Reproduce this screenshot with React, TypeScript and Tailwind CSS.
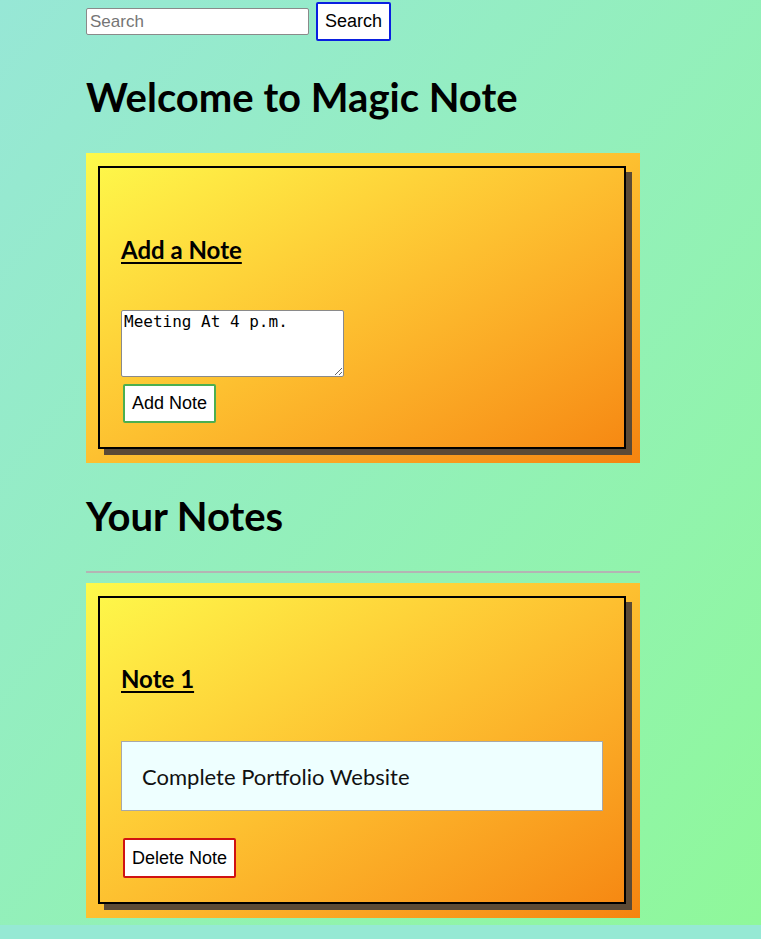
import React, { useState } from 'react'

const heading = { fontFamily: '"Source Sans Pro", Lato, "Noto Sans", sans-serif' }

function Card({ children }: { children: React.ReactNode }) {
  return (
    <div className="w-[554px] bg-gradient-to-br from-[#fdfa4b] to-[#f5840f] pl-[12px] pr-[14px] pt-[13px] pb-[14px]">
      <div className="border-2 border-black shadow-[6px_6px_0_#5b4a36] px-[21px]">{children}</div>
    </div>
  )
}

export default function App() {
  const [text, setText] = useState('Meeting At 4 p.m.')

  return (
    <div className="bg-[#96e9d4]">
      <div
        className="min-h-[925px] bg-gradient-to-br from-[#97e7d6] to-[#8ff89a] pl-[86px]"
        style={{ fontFamily: '"Liberation Sans", Arial, sans-serif' }}
      >
        {/* search bar */}
        <div className="flex items-start gap-[7px] pt-[2px]">
          <input
            placeholder="Search"
            className="mt-[6px] w-[223px] h-[27px] bg-white border border-[#8a8a8a] rounded-[2px] px-[3px] text-[17px] text-black placeholder:text-[#757575]"
          />
          <button className="h-[39px] px-[7px] bg-white border-2 border-[#0a1fe0] rounded-[2px] text-[18px] text-black">
            Search
          </button>
        </div>

        <h1 className="mt-[32px] text-[40px] font-bold leading-[48px] text-black" style={heading}>
          Welcome to Magic Note
        </h1>

        <div className="mt-[32px]">
          <Card>
            <h3 className="pt-[68px] text-[24px] font-bold underline underline-offset-[3px] leading-[28px]" style={heading}>
              Add a Note
            </h3>
            <textarea
              value={text}
              onChange={(e) => setText(e.target.value)}
              className="mt-[46px] block w-[223px] h-[67px] bg-white border border-[#8a8a8a] rounded-[2px] px-[2px] py-[1px] text-[16px] leading-[19px] text-black"
              style={{ fontFamily: '"DejaVu Sans Mono", "Liberation Mono", monospace' }}
            />
            <button className="mt-[7px] mb-[24px] ml-[2px] h-[39px] px-[7px] bg-white border-2 border-[#4caf50] rounded-[2px] text-[18px] text-black">
              Add Note
            </button>
          </Card>
        </div>

        <h1 className="mt-[29px] text-[40px] font-bold leading-[48px] text-black" style={heading}>
          Your Notes
        </h1>
        <hr className="mt-[31px] w-[554px] border-0 border-t-2 border-[#b4b4b4]" />

        <div className="mt-[10px]">
          <Card>
            <h3 className="pt-[67px] text-[24px] font-bold underline underline-offset-[3px] leading-[28px]" style={heading}>
              Note 1
            </h3>
            <div className="mt-[48px] h-[70px] flex items-center bg-[#eeffff] border border-[#a8a8a8] px-[20px]">
              <p className="text-[22px] text-[#111]" style={heading}>
                Complete Portfolio Website
              </p>
            </div>
            <button className="mt-[27px] mb-[24px] ml-[2px] h-[40px] px-[7px] bg-white border-2 border-[#d01212] rounded-[2px] text-[18px] text-black">
              Delete Note
            </button>
          </Card>
        </div>
      </div>
      <div className="h-[14px]" />
    </div>
  )
}
